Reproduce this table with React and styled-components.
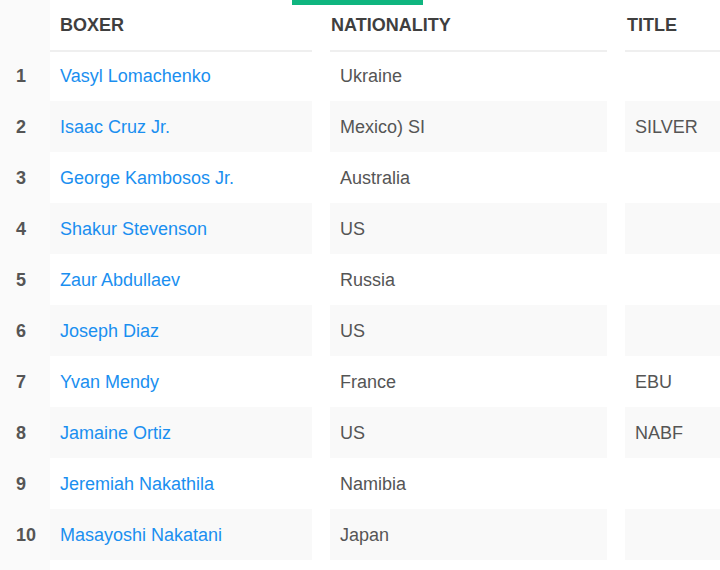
import React from "react";
import styled, { createGlobalStyle } from "styled-components";

const GlobalStyle = createGlobalStyle`
  html, body {
    margin: 0;
    padding: 0;
    background: #ffffff;
    overflow: hidden;
  }
  body {
    font-family: "Liberation Sans", Arial, sans-serif;
  }
`;

const Page = styled.div`
  position: relative;
  width: 720px;
  min-height: 570px;
  background: linear-gradient(to right, #fafafa 50px, #ffffff 50px);
  overflow: hidden;
`;

const Indicator = styled.div`
  position: absolute;
  top: 0;
  left: 292px;
  width: 131px;
  height: 5px;
  background: #0fb57f;
`;

const Row = styled.div`
  display: flex;
  height: ${(p) => (p.$header ? "50px" : "51px")};
  align-items: stretch;
`;

const RankCell = styled.div`
  width: 50px;
  flex: none;
  box-sizing: border-box;
  padding-left: 16px;
  padding-top: 2px;
  display: flex;
  align-items: center;
  font-size: 18px;
  font-weight: bold;
  color: #555555;
`;

const Cell = styled.div`
  flex: ${(p) => (p.$grow ? "1 1 auto" : "none")};
  width: ${(p) => (p.$w ? `${p.$w}px` : "auto")};
  margin-right: ${(p) => p.$gap || 0}px;
  box-sizing: border-box;
  padding-left: ${(p) => p.$pad ?? 10}px;
  padding-top: 2px;
  display: flex;
  align-items: center;
  font-size: 18px;
  color: ${(p) => (p.$link ? "#1a8ff0" : "#555555")};
  background: ${(p) => (p.$striped ? "#f9f9f9" : "transparent")};
  white-space: nowrap;
`;

const HeadCell = styled(Cell)`
  padding-top: 0;
  font-weight: bold;
  text-transform: uppercase;
  color: #3f3f3f;
  box-shadow: 0 2px 0 #efefef;
`;

const rows = [
  ["Vasyl Lomachenko", "Ukraine", ""],
  ["Isaac Cruz Jr.", "Mexico) SI", "SILVER"],
  ["George Kambosos Jr.", "Australia", ""],
  ["Shakur Stevenson", "US", ""],
  ["Zaur Abdullaev", "Russia", ""],
  ["Joseph Diaz", "US", ""],
  ["Yvan Mendy", "France", "EBU"],
  ["Jamaine Ortiz", "US", "NABF"],
  ["Jeremiah Nakathila", "Namibia", ""],
  ["Masayoshi Nakatani", "Japan", ""],
];

export default function App() {
  return (
    <>
      <GlobalStyle />
      <Page>
        <Indicator />
        <Row $header>
          <RankCell />
          <HeadCell $w={262} $gap={18} $pad={10}>Boxer</HeadCell>
          <HeadCell $w={277} $gap={18} $pad={1}>Nationality</HeadCell>
          <HeadCell $grow $pad={2}>Title</HeadCell>
        </Row>
        {rows.map(([name, nat, title], i) => {
          const striped = i % 2 === 1;
          return (
            <Row key={name}>
              <RankCell>{i + 1}</RankCell>
              <Cell $w={262} $gap={18} $link $striped={striped}>{name}</Cell>
              <Cell $w={277} $gap={18} $striped={striped}>{nat}</Cell>
              <Cell $grow $striped={striped}>{title}</Cell>
            </Row>
          );
        })}
      </Page>
    </>
  );
}
